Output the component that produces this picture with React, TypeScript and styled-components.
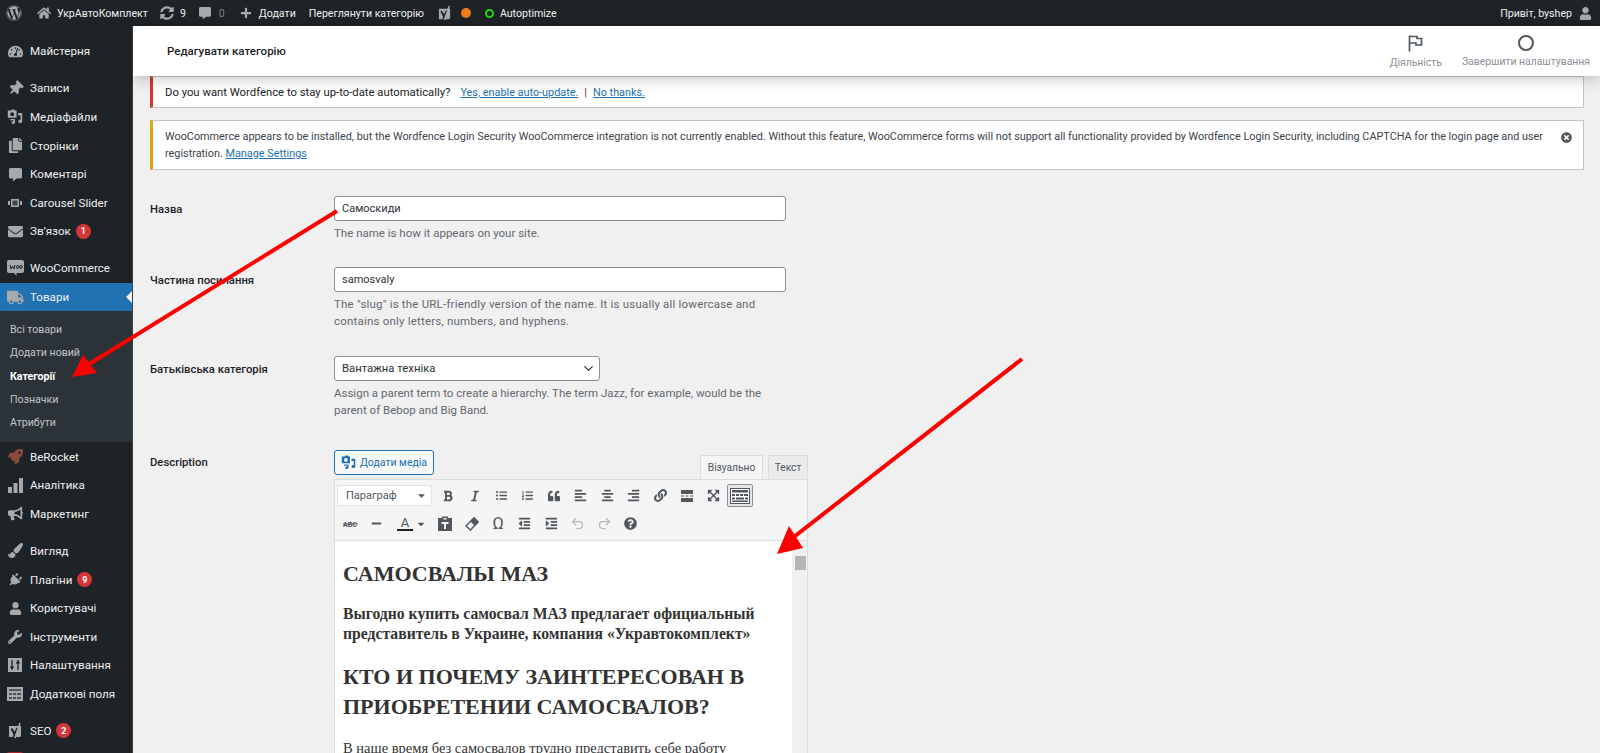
import React from "react";
import styled, { createGlobalStyle } from "styled-components";
import {
  FaWordpress, FaHome, FaSyncAlt, FaCommentAlt, FaPlus, FaUser, FaTachometerAlt, FaThumbtack,
  FaCopy, FaEnvelope, FaTruck, FaRocket, FaBullhorn, FaPaintBrush, FaPlug, FaWrench, FaBold, FaItalic,
  FaListUl, FaListOl, FaQuoteLeft, FaAlignLeft, FaAlignCenter, FaAlignRight, FaLink, FaExpandArrowsAlt,
  FaMinus, FaOutdent, FaIndent, FaQuestionCircle, FaTimesCircle, FaCaretDown,
} from "react-icons/fa";
import { Undo2, Redo2, ChevronDown } from "lucide-react";

const GlobalStyle = createGlobalStyle`
  html, body { margin: 0; height: 100%; overflow: hidden; background: #f0f0f1; }
  body { font-family: Roboto, "Open Sans", sans-serif; font-size: 12px; color: #3c434a; }
`;

const MediaIcon = ({ size = 16, color = "currentColor" }: { size?: number; color?: string }) => (
  <svg width={size} height={size} viewBox="0 0 20 20" fill={color}>
    <path d="M1 2h4l1-1.500h3L10 2h2v9H1zM6.500 4a2.500 2.500 0 1 0 0 5 2.500 2.500 0 0 0 0-5z" fillRule="evenodd" />
    <path d="M14 5h5v10.500a2.500 2 0 1 1-2-2V8h-3zM4 12.500h6v4.500a2.200 1.800 0 1 1-2-1.800v-1H4z" />
  </svg>
);
const CarouselIcon = () => (
  <svg width={14} height={10} viewBox="0 0 14 10" fill="#a7aaad">
    <rect x="3" y="1" width="8" height="8" /><rect x="0" y="3" width="2" height="4" /><rect x="12" y="3" width="2" height="4" />
    <rect x="4.500" y="2.500" width="5" height="5" fill="#3c434a" />
  </svg>
);
const WooIcon = () => (
  <svg width={17} height={16} viewBox="0 0 17 16">
    <rect x="0" y="0" width="17" height="13" rx="2" fill="#a7aaad" />
    <path d="M7 13l2.500 3v-3z" fill="#a7aaad" />
    <path d="M3 5l1 4 1.500-3L7 9l1-4M9.500 7a1.200 1.500 0 1 0 2.400 0 1.200 1.500 0 1 0-2.400 0M12.800 7a1.200 1.500 0 1 0 2.400 0 1.200 1.500 0 1 0-2.400 0" fill="none" stroke="#1d2327" strokeWidth="1" />
  </svg>
);
const YoastIcon = ({ size = 16 }: { size?: number }) => (
  <svg width={size} height={size} viewBox="0 0 16 16">
    <path d="M2 3h12v9.500a1.500 1.500 0 0 1-1.500 1.500H2z" fill="#a7aaad" />
    <path d="M4.500 5.500L7.500 11l3-6" fill="none" stroke="#1d2327" strokeWidth="2" />
    <path d="M13 0L8 15" stroke="#a7aaad" strokeWidth="1.600" />
    <path d="M7.500 11L6.500 14" stroke="#1d2327" strokeWidth="1.500" />
  </svg>
);
const BarsIcon = () => (
  <svg width={15} height={15} viewBox="0 0 15 15" fill="#a7aaad">
    <rect x="0" y="9" width="4" height="6" /><rect x="5.500" y="5" width="4" height="10" /><rect x="11" y="0" width="4" height="15" />
  </svg>
);
const SettingsIcon = () => (
  <svg width={14} height={14} viewBox="0 0 14 14">
    <rect width="14" height="14" fill="#a7aaad" />
    <path d="M4 2v10M2.500 8.500L4 11l1.500-2.500M10 12V2M8.500 5.500L10 3l1.500 2.500" stroke="#1d2327" strokeWidth="1.300" fill="none" />
  </svg>
);
const FieldsIcon = () => (
  <svg width={16} height={14} viewBox="0 0 16 14">
    <rect width="16" height="14" fill="#a7aaad" />
    <path d="M2 2h12v2H2zM2 6h3v2H2zM6 6h3v2H6zM10 6h4v2h-4zM2 10h3v2H2zM6 10h3v2H6zM10 10h4v2h-4z" fill="#50555a" />
  </svg>
);
const WordfenceMark = () => (
  <svg width={16} height={16} viewBox="0 0 16 16"><rect width="16" height="16" rx="2" fill="#a4262c" /></svg>
);
const FlagIcon = () => (
  <svg width={15} height={17} viewBox="0 0 15 17" fill="none" stroke="#50575e" strokeWidth="1.700">
    <path d="M1.500 0.500V16.500" />
    <path d="M1.500 1.500H9V3.500H13.500V10H8V8H1.500" />
  </svg>
);
const MoreIcon = () => (
  <svg width={14} height={12} viewBox="0 0 14 12" fill="#50575e">
    <rect x="1" y="0" width="12" height="4" /><rect x="1" y="8" width="12" height="4" />
    <path d="M1 5.500h3v1H1zM5.500 5.500h3v1h-3zM10 5.500h3v1h-3z" />
  </svg>
);
const KeyboardIcon = () => (
  <svg width={20} height={16} viewBox="0 0 20 16">
    <rect x="0.500" y="0.500" width="19" height="15" fill="#fff" stroke="#50575e" />
    <path d="M2 2h16v2.500H2zM2 6h3v2H2zM6 6h3v2H6zM10 6h3v2h-3zM14 6h4v2h-4zM2 9.500h3v2H2zM6 9.500h8v2H6zM15 9.500h3v2h-3zM2 12.500h16v1.500H2z" fill="#50575e" />
  </svg>
);
const StrikeIcon = () => (
  <svg width={15} height={10} viewBox="0 0 15 10">
    <text x="0" y="8" fontSize="7" fontFamily="Roboto, sans-serif" fontWeight="700" fill="#50575e">ABC</text>
    <path d="M0 5h15" stroke="#50575e" />
  </svg>
);
const ColorAIcon = () => (
  <svg width={18} height={16} viewBox="0 0 18 16">
    <text x="9" y="11" fontSize="13" textAnchor="middle" fontFamily="Roboto, sans-serif" fill="#50575e">A</text>
    <rect x="1" y="13" width="16" height="2" fill="#1d2327" />
  </svg>
);
const PasteIcon = () => (
  <svg width={14} height={15} viewBox="0 0 14 15">
    <path d="M0 2h4V0.500h6V2h4v13H0z" fill="#50575e" />
    <rect x="5.500" y="2" width="3" height="1.500" fill="#f5f5f5" />
    <path d="M3.500 6h7v2H8v5H6V8H3.500z" fill="#f5f5f5" />
  </svg>
);
const EraserIcon = () => (
  <svg width={14} height={14} viewBox="0 0 14 14" fill="none" stroke="#50575e" strokeWidth="1.400">
    <path d="M9 1l4 4-7.500 8L1 9z" />
    <path d="M9 1l4 4-3 3-4-4z" fill="#50575e" />
  </svg>
);

const sections = [
  [{ icon: <FaTachometerAlt size={15} />, label: "Майстерня" }],
  [
    { icon: <FaThumbtack size={15} style={{ transform: "rotate(45deg)" }} />, label: "Записи" },
    { icon: <MediaIcon size={16} />, label: "Медіафайли" },
    { icon: <FaCopy size={15} />, label: "Сторінки" },
    { icon: <FaCommentAlt size={13} />, label: "Коментарі" },
    { icon: <CarouselIcon />, label: "Carousel Slider" },
    { icon: <FaEnvelope size={15} />, label: "Зв’язок", badge: 1 },
  ],
];
const sectionsAfter = [
  [
    { icon: <FaRocket size={15} color="#8a4a3c" />, label: "BeRocket" },
    { icon: <BarsIcon />, label: "Аналітика" },
    { icon: <FaBullhorn size={15} />, label: "Маркетинг" },
  ],
  [
    { icon: <FaPaintBrush size={15} />, label: "Вигляд" },
    { icon: <FaPlug size={14} style={{ transform: "rotate(45deg)" }} />, label: "Плагіни", badge: 9 },
    { icon: <FaUser size={13} />, label: "Користувачі" },
    { icon: <FaWrench size={14} />, label: "Інструменти" },
    { icon: <SettingsIcon />, label: "Налаштування" },
    { icon: <FieldsIcon />, label: "Додаткові поля" },
  ],
];

const App: React.FC = () => (
  <Page>
    <GlobalStyle />
    <AdminBar>
      <BarGroup>
        <BarItem $left={6}><FaWordpress size={16} /></BarItem>
        <BarItem $left={15}><FaHome size={14} /><BarText $left={6}>УкрАвтоКомплект</BarText></BarItem>
        <BarItem $left={12}><FaSyncAlt size={14} /><BarText $left={6}>9</BarText></BarItem>
        <BarItem $left={13}><FaCommentAlt size={12} /><BarText $left={8} $dim>0</BarText></BarItem>
        <BarItem $left={15}><FaPlus size={12} /><BarText $left={7}>Додати</BarText></BarItem>
        <BarItem $left={13}><BarText>Переглянути категорію</BarText></BarItem>
        <BarItem $left={13}><YoastIcon size={15} /></BarItem>
        <BarItem $left={9}><OrangeDot /></BarItem>
        <BarItem $left={14}><GreenRing /><BarText $left={6}>Autoptimize</BarText></BarItem>
      </BarGroup>
      <BarItem><BarText>Привіт, byshep</BarText><UserIcon><FaUser size={13} /></UserIcon></BarItem>
    </AdminBar>
    <Body>
      <Sidebar>
        {sections.map((group, i) => (
          <MenuGroup key={i}>
            {group.map((item) => <MenuRow key={item.label} {...item} />)}
          </MenuGroup>
        ))}
        <MenuGroup>
          <MenuRow icon={<WooIcon />} label="WooCommerce" />
          <MenuItem $active>
            <MenuIcon $active><FaTruck size={17} /></MenuIcon>
            <span>Товари</span>
            <ActiveNotch />
          </MenuItem>
          <SubMenu>
            <SubItem>Всі товари</SubItem>
            <SubItem>Додати новий</SubItem>
            <SubItem $current>Категорії</SubItem>
            <SubItem>Позначки</SubItem>
            <SubItem>Атрибути</SubItem>
          </SubMenu>
          {sectionsAfter[0].map((item) => <MenuRow key={item.label} {...item} />)}
        </MenuGroup>
        <MenuGroup>
          {sectionsAfter[1].map((item) => <MenuRow key={item.label} {...item} />)}
        </MenuGroup>
        <MenuGroup>
          <MenuRow icon={<YoastIcon />} label="SEO" badge={2} />
          <MenuItem><MenuIcon><WordfenceMark /></MenuIcon></MenuItem>
        </MenuGroup>
      </Sidebar>
      <Main>
        <HeaderBar>
          <PageTitle>Редагувати категорію</PageTitle>
          <HeaderActions>
            <HeaderAction><FlagIcon /><span>Діяльність</span></HeaderAction>
            <HeaderAction><HollowCircle /><span>Завершити налаштування</span></HeaderAction>
          </HeaderActions>
        </HeaderBar>
        <Content>
          <Notice $color="#d63638" $height={32}>
            <NoticeLead>Do you want Wordfence to stay up-to-date automatically?</NoticeLead>
            <NoticeLink $left={10}>Yes, enable auto-update.</NoticeLink>
            <Pipe>|</Pipe>
            <NoticeLink>No thanks.</NoticeLink>
          </Notice>
          <Notice $color="#dba617" $height={50} $top={12}>
            <NoticeText>
              WooCommerce appears to be installed, but the Wordfence Login Security WooCommerce integration is not currently enabled. Without this feature, WooCommerce forms will not support all functionality provided by Wordfence Login Security, including CAPTCHA for the login page and user registration. <NoticeLink>Manage Settings</NoticeLink>
            </NoticeText>
            <Dismiss><FaTimesCircle size={11} /></Dismiss>
          </Notice>
          <FormRow $top={26}>
            <FieldLabel>Назва</FieldLabel>
            <Field>
              <TextInput readOnly value="Самоскиди" />
              <Help>The name is how it appears on your site.</Help>
            </Field>
          </FormRow>
          <FormRow $top={25}>
            <FieldLabel>Частина посилання</FieldLabel>
            <Field>
              <TextInput readOnly value="samosvaly" />
              <Help $spacing={0.2}>The "slug" is the URL-friendly version of the name. It is usually all lowercase and contains only letters, numbers, and hyphens.</Help>
            </Field>
          </FormRow>
          <FormRow $top={25.5}>
            <FieldLabel>Батьківська категорія</FieldLabel>
            <Field>
              <SelectBox>Вантажна техніка<ChevronDown size={15} strokeWidth={2} /></SelectBox>
              <Help>Assign a parent term to create a hierarchy. The term Jazz, for example, would be the parent of Bebop and Big Band.</Help>
            </Field>
          </FormRow>
          <FormRow $top={31}>
            <FieldLabel $top={5}>Description</FieldLabel>
            <EditorWrap>
              <EditorTop>
                <MediaButton><MediaIcon size={15} color="#2271b1" />Додати медіа</MediaButton>
                <Tabs>
                  <Tab $active $width={63}>Візуально</Tab>
                  <Tab $width={40}>Текст</Tab>
                </Tabs>
              </EditorTop>
              <Editor>
                <Toolbar>
                  <ToolRow>
                    <FormatSelect>Параграф<FaCaretDown size={11} /></FormatSelect>
                    <Tool><FaBold size={12} /></Tool>
                    <Tool><FaItalic size={12} /></Tool>
                    <Tool><FaListUl size={11} /></Tool>
                    <Tool><FaListOl size={11} /></Tool>
                    <Tool><FaQuoteLeft size={12} /></Tool>
                    <Tool><FaAlignLeft size={13} /></Tool>
                    <Tool><FaAlignCenter size={13} /></Tool>
                    <Tool><FaAlignRight size={13} /></Tool>
                    <Tool><FaLink size={13} /></Tool>
                    <Tool><MoreIcon /></Tool>
                    <Tool><FaExpandArrowsAlt size={13} /></Tool>
                    <Tool $pressed><KeyboardIcon /></Tool>
                  </ToolRow>
                  <ToolRow>
                    <Tool><StrikeIcon /></Tool>
                    <Tool><FaMinus size={11} /></Tool>
                    <SplitTool><ColorAIcon /><FaCaretDown size={10} /></SplitTool>
                    <Tool><PasteIcon /></Tool>
                    <Tool><EraserIcon /></Tool>
                    <Tool><OmegaGlyph>Ω</OmegaGlyph></Tool>
                    <Tool><FaOutdent size={13} /></Tool>
                    <Tool><FaIndent size={13} /></Tool>
                    <Tool $disabled><Undo2 size={15} /></Tool>
                    <Tool $disabled><Redo2 size={15} /></Tool>
                    <Tool><FaQuestionCircle size={13} /></Tool>
                  </ToolRow>
                </Toolbar>
                <EditorBody>
                  <Document>
                    <DocH1>САМОСВАЛЫ МАЗ</DocH1>
                    <DocLead>Выгодно купить самосвал МАЗ предлагает официальный представитель в Украине, компания «Укравтокомплект»</DocLead>
                    <DocH2>КТО И ПОЧЕМУ ЗАИНТЕРЕСОВАН В ПРИОБРЕТЕНИИ САМОСВАЛОВ?</DocH2>
                    <DocText>В наше время без самосвалов трудно представить себе работу</DocText>
                  </Document>
                  <ScrollTrack><ScrollThumb /></ScrollTrack>
                </EditorBody>
              </Editor>
            </EditorWrap>
          </FormRow>
        </Content>
      </Main>
    </Body>
    <ArrowLayer viewBox="0 0 1600 753" width={1600} height={753}>
      <path d="M337 211L86 366" stroke="#fe0000" strokeWidth="4" />
      <path d="M72 377L83 355L97 373Z" fill="#fe0000" />
      <path d="M1022 359L790 540" stroke="#fe0000" strokeWidth="4" />
      <path d="M777 554L789 526L803 548Z" fill="#fe0000" />
    </ArrowLayer>
  </Page>
);

const MenuRow: React.FC<{ icon: React.ReactNode; label: string; badge?: number }> = ({ icon, label, badge }) => (
  <MenuItem>
    <MenuIcon>{icon}</MenuIcon>
    <span>{label}</span>
    {badge ? <Badge>{badge}</Badge> : null}
  </MenuItem>
);

export default App;

const Page = styled.div`
  position: relative;
  width: 1600px;
  height: 753px;
  overflow: hidden;
`;

const ArrowLayer = styled.svg`
  position: absolute;
  inset: 0;
  pointer-events: none;
`;

const AdminBar = styled.header`
  height: 26px;
  background: #1d2327;
  display: flex;
  align-items: center;
  justify-content: space-between;
  color: #f0f0f1;
  font-size: 10.600px;
  padding-right: 8px;
`;

const BarGroup = styled.div`
  display: flex;
  align-items: center;
`;

const BarItem = styled.div<{ $left?: number }>`
  display: flex;
  align-items: center;
  margin-left: ${({ $left }) => $left ?? 0}px;
  color: #f0f0f1;
  svg { color: #a7aaad; }
`;

const BarText = styled.span<{ $left?: number; $dim?: boolean }>`
  margin-left: ${({ $left }) => $left ?? 0}px;
  color: ${({ $dim }) => ($dim ? "#7e8387" : "#f0f0f1")};
`;

const UserIcon = styled.span`
  display: flex;
  margin-left: 7px;
`;

const OrangeDot = styled.span`
  width: 10px;
  height: 10px;
  border-radius: 50%;
  background: #ee7c1b;
`;

const GreenRing = styled.span`
  width: 9px;
  height: 9px;
  box-sizing: border-box;
  border-radius: 50%;
  border: 2px solid #2bd01b;
`;

const Body = styled.div`
  display: flex;
  height: 727px;
`;

const Sidebar = styled.nav`
  width: 133px;
  flex-shrink: 0;
  background: #1d2327;
  padding-top: 11px;
  color: #f0f0f1;
  border-right: 1px solid #3a3f44;
  box-sizing: border-box;
  overflow: hidden;
`;

const MenuGroup = styled.div`
  margin-bottom: 8.500px;
`;

const MenuItem = styled.div<{ $active?: boolean }>`
  position: relative;
  height: 28.600px;
  display: flex;
  align-items: center;
  font-size: 11.600px;
  color: #f0f0f1;
  background: ${({ $active }) => ($active ? "#2271b1" : "transparent")};
`;

const MenuIcon = styled.span<{ $active?: boolean }>`
  width: 30px;
  flex-shrink: 0;
  display: flex;
  justify-content: center;
  color: #a7aaad;
`;

const ActiveNotch = styled.span`
  position: absolute;
  right: 0;
  top: 50%;
  margin-top: -6px;
  border: 6px solid transparent;
  border-right-color: #f0f0f1;
`;

const Badge = styled.span`
  margin-left: 5px;
  width: 15px;
  height: 15px;
  border-radius: 50%;
  background: #d63638;
  color: #fff;
  font-size: 9px;
  font-weight: 700;
  display: flex;
  align-items: center;
  justify-content: center;
`;

const SubMenu = styled.div`
  background: #2c3338;
  padding: 6.500px 0 8px 10px;
`;

const SubItem = styled.div<{ $current?: boolean }>`
  height: 23.300px;
  display: flex;
  align-items: center;
  font-size: 10.600px;
  color: ${({ $current }) => ($current ? "#fff" : "#c3c4c7")};
  font-weight: ${({ $current }) => ($current ? 700 : 400)};
`;

const Main = styled.main`
  flex: 1;
  min-width: 0;
  display: flex;
  flex-direction: column;
`;

const HeaderBar = styled.div`
  position: relative;
  z-index: 1;
  height: 50px;
  background: #fff;
  display: flex;
  align-items: center;
  justify-content: space-between;
  padding: 0 10px 0 34px;
  box-shadow: 0 3px 14px rgba(0, 0, 0, 0.22);
  flex-shrink: 0;
`;

const PageTitle = styled.h1`
  margin: 0;
  font-size: 11.500px;
  font-weight: 500;
  color: #1d2327;
`;

const HeaderActions = styled.div`
  display: flex;
  gap: 20px;
  padding-top: 2px;
`;

const HeaderAction = styled.div`
  display: flex;
  flex-direction: column;
  align-items: center;
  gap: 4px;
  font-size: 10.400px;
  color: #8c8f94;
`;

const HollowCircle = styled.span`
  width: 16px;
  height: 16px;
  box-sizing: border-box;
  border-radius: 50%;
  border: 2px solid #50575e;
`;

const Content = styled.div`
  padding: 0 16px 0 17px;
`;

const Notice = styled.div<{ $color: string; $height: number; $top?: number }>`
  position: relative;
  height: ${({ $height }) => $height}px;
  margin-top: ${({ $top }) => $top ?? 0}px;
  box-sizing: border-box;
  display: flex;
  align-items: center;
  padding: 0 34px 0 12px;
  background: #fff;
  border: 1px solid #c3c4c7;
  border-left: 3px solid ${({ $color }) => $color};
  font-size: 10.850px;
  color: #3c434a;
  white-space: pre-wrap;
`;

const NoticeLead = styled.span`
  font-size: 11.300px;
  color: #1d2327;
`;

const NoticeText = styled.div`
  line-height: 17.500px;
`;

const NoticeLink = styled.a<{ $left?: number }>`
  margin-left: ${({ $left }) => $left ?? 0}px;
  color: #2271b1;
  text-decoration: underline;
`;

const Pipe = styled.span`
  margin: 0 6px;
`;

const Dismiss = styled.span`
  position: absolute;
  right: 11px;
  top: 11px;
  color: #50575e;
`;

const FormRow = styled.div<{ $top: number }>`
  display: grid;
  grid-template-columns: 184px 1fr;
  margin-top: ${({ $top }) => $top}px;
`;

const FieldLabel = styled.label<{ $top?: number }>`
  font-size: 11.300px;
  font-weight: 500;
  color: #1d2327;
  padding-top: ${({ $top }) => $top ?? 6}px;
  line-height: 15px;
`;

const Field = styled.div`
  width: 452px;
`;

const TextInput = styled.input`
  display: block;
  width: 100%;
  height: 25px;
  box-sizing: border-box;
  border: 1px solid #8c8f94;
  border-radius: 3px;
  background: #fff;
  padding: 0 7px;
  font: 11px Roboto, sans-serif;
  color: #2c3338;
  outline: none;
`;

const SelectBox = styled.div`
  width: 266px;
  height: 25px;
  box-sizing: border-box;
  border: 1px solid #8c8f94;
  border-radius: 3px;
  background: #fff;
  display: flex;
  align-items: center;
  justify-content: space-between;
  padding: 0 3px 0 7px;
  font-size: 11.300px;
  color: #2c3338;
`;

const Help = styled.p<{ $spacing?: number }>`
  margin: 4px 0 0;
  font-size: 11.500px;
  line-height: 17px;
  letter-spacing: ${({ $spacing }) => $spacing ?? 0}px;
  color: #646970;
`;

const EditorWrap = styled.div`
  width: 474px;
`;

const EditorTop = styled.div`
  display: flex;
  align-items: flex-end;
  justify-content: space-between;
  height: 29px;
`;

const MediaButton = styled.button`
  height: 25px;
  width: 100px;
  margin-bottom: 4px;
  box-sizing: border-box;
  border: 1px solid #2271b1;
  border-radius: 3px;
  background: #f6f7f7;
  color: #2271b1;
  display: flex;
  align-items: center;
  justify-content: center;
  gap: 4px;
  padding: 0;
  font: 10.500px Roboto, sans-serif;
`;

const Tabs = styled.div`
  display: flex;
  gap: 5px;
`;

const Tab = styled.div<{ $active?: boolean; $width: number }>`
  width: ${({ $width }) => $width}px;
  height: 24px;
  box-sizing: border-box;
  display: flex;
  align-items: center;
  justify-content: center;
  font-size: 10.200px;
  color: #50575e;
  border: 1px solid #dcdcde;
  border-bottom: none;
  background: ${({ $active }) => ($active ? "#f5f5f5" : "#ebebeb")};
`;

const Editor = styled.div`
  border: 1px solid #dcdcde;
  border-bottom: none;
`;

const Toolbar = styled.div`
  background: #f5f5f5;
  border-bottom: 1px solid #dcdcde;
  height: 61px;
  padding: 2px 2px 0;
  box-sizing: border-box;
`;

const ToolRow = styled.div`
  display: flex;
  align-items: center;
  height: 28px;
`;

const FormatSelect = styled.div`
  width: 95px;
  height: 21px;
  margin-right: 3px;
  box-sizing: border-box;
  background: #fff;
  border: 1px solid #e2e4e7;
  display: flex;
  align-items: center;
  justify-content: space-between;
  padding: 0 4px 0 8px;
  font-size: 11px;
  color: #50575e;
`;

const Tool = styled.span<{ $pressed?: boolean; $disabled?: boolean }>`
  width: 26.500px;
  height: 23px;
  box-sizing: border-box;
  flex-shrink: 0;
  display: flex;
  align-items: center;
  justify-content: center;
  color: ${({ $disabled }) => ($disabled ? "#b4b9be" : "#50575e")};
  border: ${({ $pressed }) => ($pressed ? "1px solid #8c8f94" : "none")};
  border-radius: ${({ $pressed }) => ($pressed ? "2px" : "0")};
  background: ${({ $pressed }) => ($pressed ? "#e6e6e6" : "transparent")};
`;

const SplitTool = styled(Tool)`
  width: 42px;
  gap: 2px;
`;

const OmegaGlyph = styled.span`
  font-size: 17px;
  line-height: 1;
`;

const EditorBody = styled.div`
  display: flex;
  background: #fff;
  height: 220px;
`;

const Document = styled.article`
  flex: 1;
  padding: 0 8px;
  font-family: "Liberation Serif", serif;
  color: #333;
`;

const DocH1 = styled.h2`
  margin: 18px 0 0;
  font-size: 22px;
  line-height: 29px;
`;

const DocLead = styled.p`
  margin: 16px 0 0;
  font-size: 15.700px;
  font-weight: 700;
  line-height: 20.500px;
`;

const DocH2 = styled.h3`
  margin: 17px 0 0;
  font-size: 22px;
  line-height: 30.600px;
`;

const DocText = styled.p`
  margin: 15px 0 0;
  font-size: 14.500px;
  line-height: 20px;
`;

const ScrollTrack = styled.div`
  width: 15px;
  background: #f0f0f1;
  padding: 15px 1px 0 3px;
  box-sizing: border-box;
`;

const ScrollThumb = styled.div`
  height: 14px;
  background: #b5b5b5;
`;
